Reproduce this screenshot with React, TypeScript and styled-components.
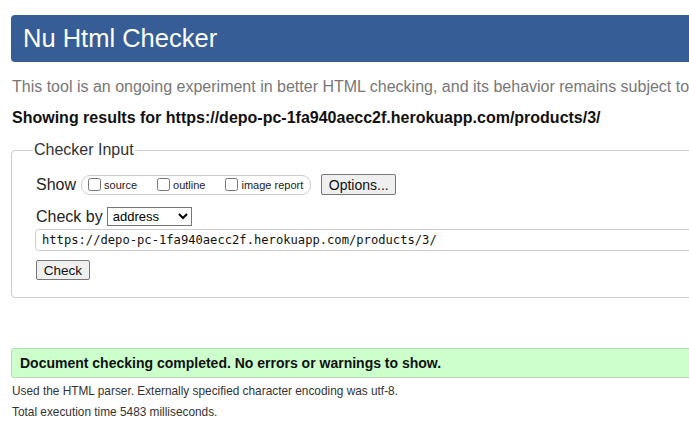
import React from "react";
import styled, { createGlobalStyle } from "styled-components";

const Global = createGlobalStyle`
  html, body { margin: 0; padding: 0; overflow: hidden; background: #fff; }
  body { font-family: "Liberation Sans", Arial, sans-serif; color: #111; }
`;

const Page = styled.div`
  width: 1100px;
  padding: 15px 0 0 11px;
`;

const Header = styled.h1`
  margin: 0;
  height: 47px;
  line-height: 47px;
  background: #365d95;
  border-radius: 4px;
  padding-left: 12px;
  color: #fff;
  font-size: 25.5px;
  font-weight: normal;
`;

const Intro = styled.p`
  margin: 15px 0 0 1px;
  font-size: 16px;
  line-height: 20px;
  color: #777;
  white-space: nowrap;
`;

const Results = styled.p`
  margin: 11px 0 0 1px;
  font-size: 16px;
  line-height: 20px;
  font-weight: bold;
  color: #111;
  white-space: nowrap;
`;

const Fieldset = styled.fieldset`
  margin: 13px 0 0 0;
  padding: 8px 0 17px 24px;
  border: 1px solid #ccc;
  border-radius: 4px;
`;

const Legend = styled.legend`
  margin-left: -3px;
  padding: 0 1px;
  font-size: 16px;
  color: #333;
`;

const Row = styled.div<{ $top: number; $gap: number }>`
  display: flex;
  align-items: center;
  gap: ${(p) => p.$gap}px;
  margin-top: ${(p) => p.$top}px;
  font-size: 16px;
  color: #222;
`;

const Pill = styled.span`
  display: inline-flex;
  align-items: center;
  height: 18px;
  border: 1px solid #ccc;
  border-radius: 9px;
  padding: 0 7px 0 6px;
  gap: 20px;
`;

const Opt = styled.label`
  display: inline-flex;
  align-items: center;
  font-size: 11px;
  color: #222;
`;

const Box = styled.input`
  margin: 0 3px 0 0;
  width: 13px;
  height: 13px;
`;

const Button = styled.button`
  font-family: "Liberation Sans", Arial, sans-serif;
  font-size: 14px;
  height: 21px;
  padding: 0 6px;
  border: 1px solid #767676;
  border-radius: 2px;
  background: #efefef;
  color: #111;
`;

const OptionsButton = styled(Button)`
  margin-left: 5px;
  width: 75px;
`;

const Select = styled.select`
  font-family: "Liberation Sans", Arial, sans-serif;
  font-size: 13px;
  height: 19px;
  width: 85px;
  border: 1px solid #767676;
  border-radius: 0;
  background: #fff;
  padding: 0 0 0 1px;
`;

const UrlInput = styled.input`
  display: block;
  box-sizing: border-box;
  width: 1100px;
  height: 22px;
  margin: 3px 0 0 -1px;
  padding: 0 6px;
  border: 1px solid #ccc;
  border-radius: 4px;
  font-family: "DejaVu Sans Mono", monospace;
  font-size: 12.15px;
  color: #111;
`;

const CheckButton = styled(Button)`
  display: block;
  margin-top: 9px;
  height: 20px;
  width: 54px;
  padding: 0;
  font-size: 13.5px;
`;

const Success = styled.p`
  margin: 50px 0 0 0;
  height: 28px;
  line-height: 28px;
  box-sizing: content-box;
  border: 1px solid #b7d7b7;
  border-radius: 3px;
  background: #ccffcc;
  padding-left: 8px;
  font-size: 14px;
  font-weight: bold;
  color: #111;
`;

const Note = styled.p<{ $top?: number }>`
  margin: ${(p) => p.$top ?? 0}px 0 0 1px;
  font-size: 11.85px;
  line-height: 21px;
  color: #333;
`;

export default function App() {
  return (
    <>
      <Global />
      <Page>
        <Header>Nu Html Checker</Header>
        <Intro>
          This tool is an ongoing experiment in better HTML checking, and its behavior remains subject to change
        </Intro>
        <Results>Showing results for https://depo-pc-1fa940aecc2f.herokuapp.com/products/3/</Results>
        <Fieldset>
          <Legend>Checker Input</Legend>
          <Row $top={7} $gap={5}>
            <span>Show</span>
            <Pill>
              <Opt><Box type="checkbox" />source</Opt>
              <Opt><Box type="checkbox" />outline</Opt>
              <Opt><Box type="checkbox" />image report</Opt>
            </Pill>
            <OptionsButton>Options...</OptionsButton>
          </Row>
          <Row $top={12} $gap={4}>
            <span>Check by</span>
            <Select defaultValue="address">
              <option value="address">address</option>
              <option value="file">file upload</option>
              <option value="text">text input</option>
            </Select>
          </Row>
          <UrlInput defaultValue="https://depo-pc-1fa940aecc2f.herokuapp.com/products/3/" />
          <CheckButton>Check</CheckButton>
        </Fieldset>
        <Success>Document checking completed. No errors or warnings to show.</Success>
        <Note $top={3}>Used the HTML parser. Externally specified character encoding was utf-8.</Note>
        <Note>Total execution time 5483 milliseconds.</Note>
      </Page>
    </>
  );
}
